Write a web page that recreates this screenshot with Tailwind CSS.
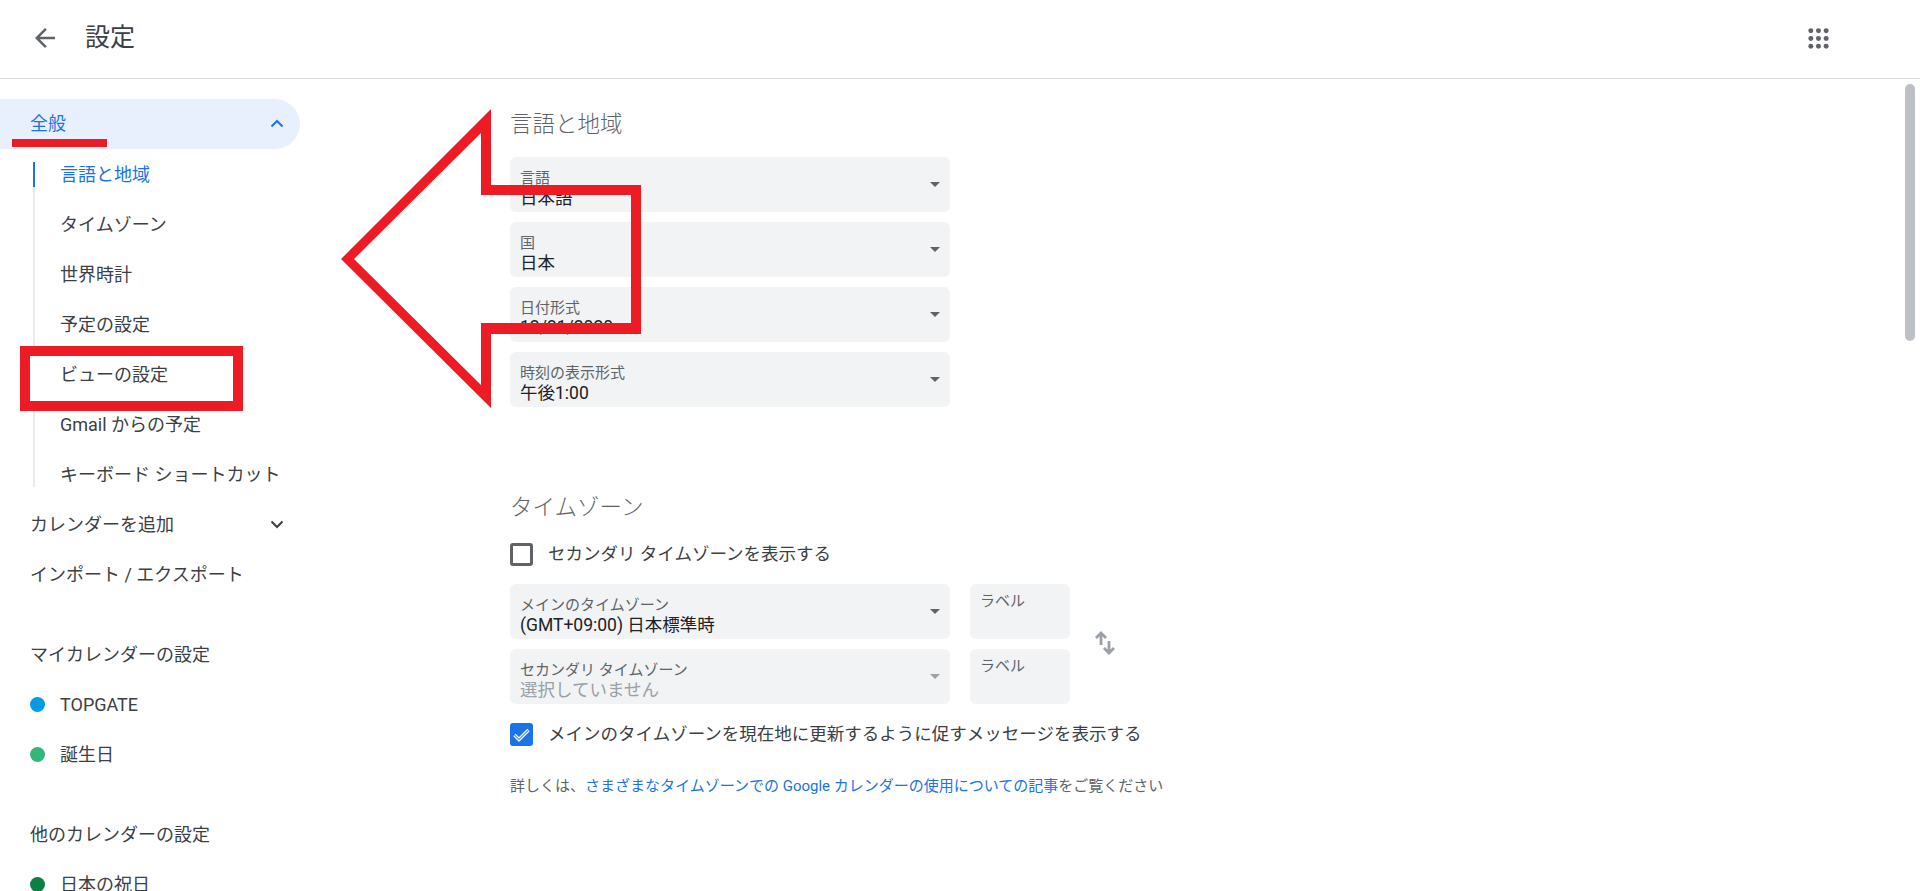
<!doctype html>
<html lang="ja">
  <head>
    <meta charset="UTF-8" />
    <title>設定</title>
    <script src="https://cdn.jsdelivr.net/npm/@tailwindcss/browser@4"></script>
  </head>
  <body class="h-[891px] overflow-hidden bg-white text-[17.5px] text-[#3c4043] font-['Roboto','Noto_Sans_CJK_JP',sans-serif]">
    <div class="relative h-[891px] overflow-hidden">
      <!-- header -->
      <header class="flex items-center h-[79px] pb-[2px] border-b border-[#dadce0]">
        <svg class="ml-[30px] w-[30px] h-[30px] text-[#5f6368]" viewBox="0 0 24 24" fill="currentColor">
          <path d="M20 11H7.830l5.590-5.590L12 4l-8 8 8 8 1.410-1.410L7.830 13H20v-2z" />
        </svg>
        <h1 class="ml-[25px] text-[25px] text-[#3c4043]">設定</h1>
        <svg class="ml-auto mr-[90px] w-[23px] h-[23px] text-[#5f6368]" viewBox="0 0 24 24" fill="currentColor">
          <circle cx="4" cy="4" r="2.600" /><circle cx="12" cy="4" r="2.600" /><circle cx="20" cy="4" r="2.600" />
          <circle cx="4" cy="12" r="2.600" /><circle cx="12" cy="12" r="2.600" /><circle cx="20" cy="12" r="2.600" />
          <circle cx="4" cy="20" r="2.600" /><circle cx="12" cy="20" r="2.600" /><circle cx="20" cy="20" r="2.600" />
        </svg>
      </header>

      <div class="flex">
        <!-- sidebar -->
        <aside class="w-[510px] shrink-0 pt-[20px] text-[18px]">
          <div class="flex items-center justify-between w-[300px] h-[50px] pl-[30px] pr-[14px] rounded-r-full bg-[#e8f0fe] text-[#1a73e8]">
            <span class="-mt-[2px]">全般</span>
            <svg class="w-[18px] h-[18px]" viewBox="0 0 18 18" fill="none" stroke="currentColor" stroke-width="2"><path d="M3.500 11.500 9 6l5.500 5.500" /></svg>
          </div>
          <ul class="h-[325px] mt-[13px] mb-[12px] ml-[33px] pl-[25px] border-l-2 border-[#e8eaed]">
            <li class="relative flex items-center h-[25px] mb-[12px] text-[#1a73e8]">
              <span class="absolute -left-[27px] top-0 w-[2px] h-[25px] bg-[#1a73e8]"></span>言語と地域
            </li>
            <li class="flex items-center h-[50px] pt-[1px]">タイムゾーン</li>
            <li class="flex items-center h-[50px] pt-[1px]">世界時計</li>
            <li class="flex items-center h-[50px] pt-[1px]">予定の設定</li>
            <li class="flex items-center h-[50px] pt-[1px]">ビューの設定</li>
            <li class="flex items-center h-[50px] pt-[1px]">Gmail からの予定</li>
            <li class="flex items-center h-[50px] pt-[1px]">キーボード ショートカット</li>
          </ul>
          <div class="flex items-center justify-between w-[300px] h-[50px] pl-[30px] pr-[14px]">
            <span>カレンダーを追加</span>
            <svg class="w-[18px] h-[18px]" viewBox="0 0 18 18" fill="none" stroke="currentColor" stroke-width="2"><path d="M3.500 6.500 9 12l5.500-5.500" /></svg>
          </div>
          <div class="flex items-center h-[50px] pt-[1px] pl-[30px]">インポート / エクスポート</div>

          <div class="flex items-center h-[50px] pt-[2px] pl-[30px] mt-[29px]">マイカレンダーの設定</div>
          <div class="flex items-center h-[50px] pt-[2px] pl-[30px]">
            <span class="w-[15px] h-[15px] mr-[15px] rounded-full bg-[#039be5]"></span>TOPGATE
          </div>
          <div class="flex items-center h-[50px] pt-[2px] pl-[30px]">
            <span class="w-[15px] h-[15px] mr-[15px] rounded-full bg-[#33b679]"></span>誕生日
          </div>

          <div class="flex items-center h-[50px] pt-[2px] pl-[30px] mt-[30px]">他のカレンダーの設定</div>
          <div class="flex items-center h-[50px] pt-[2px] pl-[30px]">
            <span class="w-[15px] h-[15px] mr-[15px] rounded-full bg-[#0b8043]"></span>日本の祝日
          </div>
        </aside>

        <!-- settings -->
        <main class="flex-1 pt-[30px]">
          <h2 class="h-[30px] leading-[30px] mb-[18px] text-[22.500px] font-light text-[#5f6368]">言語と地域</h2>
          <div class="flex flex-col gap-[10px] w-[440px]">
            <div class="flex items-center justify-between h-[55px] pl-[10px] pr-[10px] rounded-md bg-[#f1f3f4]">
              <div class="mt-[7px]">
                <div class="h-[20px] leading-[20px] text-[15px] text-[#5f6368]">言語</div>
                <div class="h-[21px] leading-[21px] text-[#202124]">日本語</div>
              </div>
              <svg class="w-[10px] h-[5px] text-[#5f6368]" viewBox="0 0 10 5" fill="currentColor"><path d="M0 0h10L5 5z" /></svg>
            </div>
            <div class="flex items-center justify-between h-[55px] pl-[10px] pr-[10px] rounded-md bg-[#f1f3f4]">
              <div class="mt-[7px]">
                <div class="h-[20px] leading-[20px] text-[15px] text-[#5f6368]">国</div>
                <div class="h-[21px] leading-[21px] text-[#202124]">日本</div>
              </div>
              <svg class="w-[10px] h-[5px] text-[#5f6368]" viewBox="0 0 10 5" fill="currentColor"><path d="M0 0h10L5 5z" /></svg>
            </div>
            <div class="flex items-center justify-between h-[55px] pl-[10px] pr-[10px] rounded-md bg-[#f1f3f4]">
              <div class="mt-[7px]">
                <div class="h-[20px] leading-[20px] text-[15px] text-[#5f6368]">日付形式</div>
                <div class="h-[21px] leading-[18px] text-[#202124]">12/31/2020</div>
              </div>
              <svg class="w-[10px] h-[5px] text-[#5f6368]" viewBox="0 0 10 5" fill="currentColor"><path d="M0 0h10L5 5z" /></svg>
            </div>
            <div class="flex items-center justify-between h-[55px] pl-[10px] pr-[10px] rounded-md bg-[#f1f3f4]">
              <div class="mt-[7px]">
                <div class="h-[20px] leading-[20px] text-[15px] text-[#5f6368]">時刻の表示形式</div>
                <div class="h-[21px] leading-[21px] text-[#202124]">午後1:00</div>
              </div>
              <svg class="w-[10px] h-[5px] text-[#5f6368]" viewBox="0 0 10 5" fill="currentColor"><path d="M0 0h10L5 5z" /></svg>
            </div>
          </div>

          <h2 class="h-[30px] leading-[30px] mt-[85px] mb-[21px] text-[22.500px] font-light text-[#5f6368]">タイムゾーン</h2>
          <div class="flex items-center h-[23px]">
            <span class="w-[23px] h-[23px] mr-[15px] rounded-[3px] border-[3px] border-[#5f6368]"></span>セカンダリ タイムゾーンを表示する
          </div>

          <div class="flex items-center mt-[18px]">
            <div class="grid grid-cols-[440px_100px] gap-x-[20px] gap-y-[10px]">
              <div class="flex items-center justify-between h-[55px] pl-[10px] pr-[10px] rounded-md bg-[#f1f3f4]">
                <div class="mt-[7px]">
                  <div class="h-[20px] leading-[20px] text-[15px] text-[#5f6368]">メインのタイムゾーン</div>
                  <div class="h-[21px] leading-[21px] text-[#202124]">(GMT+09:00) 日本標準時</div>
                </div>
                <svg class="w-[10px] h-[5px] text-[#5f6368]" viewBox="0 0 10 5" fill="currentColor"><path d="M0 0h10L5 5z" /></svg>
              </div>
              <div class="h-[55px] pt-[7px] pl-[10px] rounded-md bg-[#f1f3f4] text-[15px] leading-[20px] text-[#5f6368]">ラベル</div>
              <div class="flex items-center justify-between h-[55px] pl-[10px] pr-[10px] rounded-md bg-[#f1f3f4]">
                <div class="mt-[7px]">
                  <div class="h-[20px] leading-[20px] text-[15px] text-[#5f6368]">セカンダリ タイムゾーン</div>
                  <div class="h-[21px] leading-[21px] text-[#9aa0a6]">選択していません</div>
                </div>
                <svg class="w-[10px] h-[5px] text-[#9aa0a6]" viewBox="0 0 10 5" fill="currentColor"><path d="M0 0h10L5 5z" /></svg>
              </div>
              <div class="h-[55px] pt-[7px] pl-[10px] rounded-md bg-[#f1f3f4] text-[15px] leading-[20px] text-[#5f6368]">ラベル</div>
            </div>
            <svg class="ml-[24px] -mt-[3px] w-[22px] h-[24px] text-[#9aa0a6]" viewBox="0 0 22 24" fill="none" stroke="currentColor" stroke-width="2.800">
              <path d="M7 14V2M2 7l5-5 5 5" />
              <path d="M15 10v12M10 17l5 5 5-5" />
            </svg>
          </div>

          <div class="flex items-center h-[23px] mt-[19px]">
            <span class="flex items-center justify-center w-[23px] h-[23px] mr-[15px] rounded-[3px] bg-[#1a73e8]">
              <svg class="w-[17px] h-[17px]" viewBox="0 0 17 17" fill="none">
                <path d="M1.500 9l4.500 4.500L15.500 4" stroke="#fff" stroke-width="3.400" />
                <path d="M1.500 9l4.500 4.500L15.500 4" stroke="#5a9bee" stroke-width="1.200" />
              </svg>
            </span>メインのタイムゾーンを現在地に更新するように促すメッセージを表示する
          </div>

          <p class="h-[20px] leading-[20px] mt-[30px] text-[15px] text-[#5f6368]">詳しくは、<a class="text-[#1a73e8]">さまざまなタイムゾーンでの Google カレンダーの使用についての記事</a>をご覧ください</p>
        </main>
      </div>

      <!-- scrollbar -->
      <div class="absolute left-[1905px] top-[84px] w-[10px] h-[257px] rounded-full bg-[#bdc1c6]"></div>

      <!-- red annotations drawn over the page -->
      <div class="absolute left-[12px] top-[139px] w-[95px] h-[8px] bg-[#ed1c24]"></div>
      <div class="absolute left-[20px] top-[346px] w-[223px] h-[65px] border-[10px] border-[#ed1c24]">
        <div class="w-[10px] h-full bg-white"></div>
      </div>
      <svg class="absolute left-0 top-0 pointer-events-none" width="1920" height="891">
        <path fill="#ed1c24" fill-rule="evenodd" d="M341 259 491 109V185H641V334H491V408ZM354 259 481 385V323H631V195H481V133Z" />
      </svg>
    </div>
  </body>
</html>
